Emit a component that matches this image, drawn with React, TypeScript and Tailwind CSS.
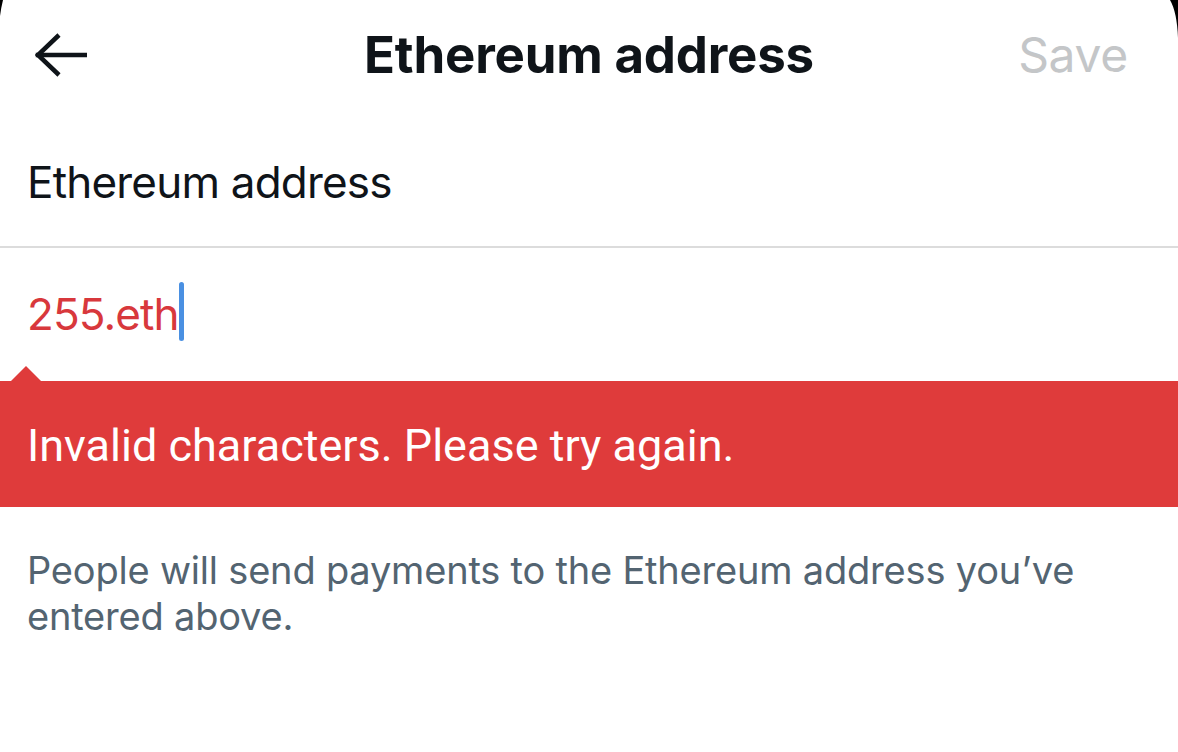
import React from "react";

export default function App() {
  return (
    <div className="relative w-[1178px] h-[752px] bg-white overflow-hidden" style={{ fontFamily: "Inter, 'Noto Sans', sans-serif" }}>
      {/* screen corners */}
      <svg className="absolute top-0 right-0" width="12" height="40" viewBox="0 0 12 40">
        <path d="M4 0 Q11 12 12 38 L12 0 Z" fill="#000" />
      </svg>
      <svg className="absolute top-0 left-0" width="6" height="18" viewBox="0 0 6 18">
        <path d="M0 0 L3 0 Q1 8 0 16 Z" fill="#000" />
      </svg>

      {/* header */}
      <div className="relative flex items-center h-[110px] px-[35px]">
        <svg width="52" height="44" viewBox="0 0 52 44" fill="none" stroke="#0f1419" strokeWidth="4.5" strokeLinecap="square">
          <path d="M3 22 H50" />
          <path d="M24 2 L3 22 L24 42" strokeLinejoin="miter" strokeLinecap="butt" />
        </svg>
        <div className="absolute left-0 right-0 text-center text-[51px] font-bold text-[#0f1419] tracking-[-0.2px] pointer-events-none">
          Ethereum address
        </div>
        <div className="ml-auto mr-[15px] text-[48px] text-[#c4c6c8] tracking-[-0.3px]">Save</div>
      </div>

      {/* label */}
      <div className="h-[138px] flex items-center pl-[27px] border-b-2 border-[#dcdcdc]">
        <span className="text-[44px] text-[#0f1419] tracking-[-0.8px] mt-[8px]">Ethereum address</span>
      </div>

      {/* input */}
      <div className="h-[133px] flex items-center pl-[27px]">
        <span className="text-[44px] text-[#d8383c] tracking-[-0.9px] -mt-[2px]">255.eth</span>
        <span className="w-[5px] h-[59px] rounded-full bg-[#4a90e2] -mt-[6px]" />
      </div>

      {/* error banner */}
      <div className="relative h-[126px] bg-[#df3b3b] flex items-center pl-[27px]">
        <svg className="absolute left-[10px] -top-[16px]" width="32" height="17" viewBox="0 0 32 17">
          <path d="M0 17 L16 1 L32 17 Z" fill="#df3b3b" />
        </svg>
        <span className="text-[45px] text-white tracking-[0px] mt-[4px]" style={{ fontFamily: "Roboto, sans-serif" }}>
          Invalid characters. Please try again.
        </span>
      </div>

      {/* helper */}
      <div className="pl-[27px] pr-[80px] pt-[40px] text-[38px] leading-[46px] text-[#536471] tracking-[-0.2px]">
        People will send payments to the Ethereum address you’ve entered above.
      </div>
    </div>
  );
}
